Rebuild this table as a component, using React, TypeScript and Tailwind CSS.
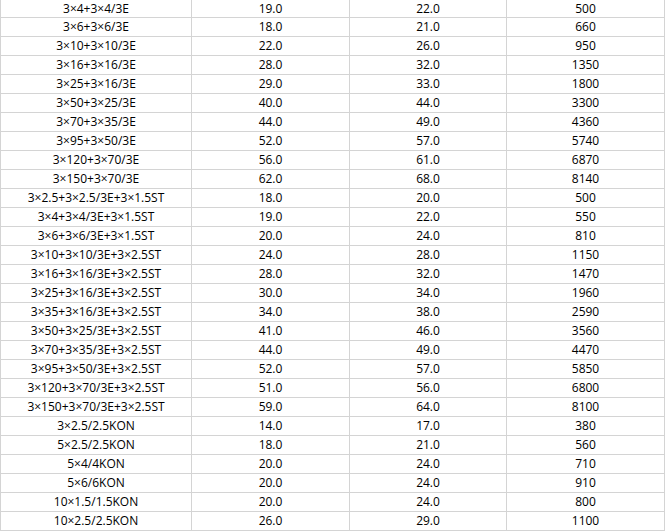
const rows: [string, string, string, string][] = [
  ['3×4+3×4/3E', '19.0', '22.0', '500'],
  ['3×6+3×6/3E', '18.0', '21.0', '660'],
  ['3×10+3×10/3E', '22.0', '26.0', '950'],
  ['3×16+3×16/3E', '28.0', '32.0', '1350'],
  ['3×25+3×16/3E', '29.0', '33.0', '1800'],
  ['3×50+3×25/3E', '40.0', '44.0', '3300'],
  ['3×70+3×35/3E', '44.0', '49.0', '4360'],
  ['3×95+3×50/3E', '52.0', '57.0', '5740'],
  ['3×120+3×70/3E', '56.0', '61.0', '6870'],
  ['3×150+3×70/3E', '62.0', '68.0', '8140'],
  ['3×2.5+3×2.5/3E+3×1.5ST', '18.0', '20.0', '500'],
  ['3×4+3×4/3E+3×1.5ST', '19.0', '22.0', '550'],
  ['3×6+3×6/3E+3×1.5ST', '20.0', '24.0', '810'],
  ['3×10+3×10/3E+3×2.5ST', '24.0', '28.0', '1150'],
  ['3×16+3×16/3E+3×2.5ST', '28.0', '32.0', '1470'],
  ['3×25+3×16/3E+3×2.5ST', '30.0', '34.0', '1960'],
  ['3×35+3×16/3E+3×2.5ST', '34.0', '38.0', '2590'],
  ['3×50+3×25/3E+3×2.5ST', '41.0', '46.0', '3560'],
  ['3×70+3×35/3E+3×2.5ST', '44.0', '49.0', '4470'],
  ['3×95+3×50/3E+3×2.5ST', '52.0', '57.0', '5850'],
  ['3×120+3×70/3E+3×2.5ST', '51.0', '56.0', '6800'],
  ['3×150+3×70/3E+3×2.5ST', '59.0', '64.0', '8100'],
  ['3×2.5/2.5KON', '14.0', '17.0', '380'],
  ['5×2.5/2.5KON', '18.0', '21.0', '560'],
  ['5×4/4KON', '20.0', '24.0', '710'],
  ['5×6/6KON', '20.0', '24.0', '910'],
  ['10×1.5/1.5KON', '20.0', '24.0', '800'],
  ['10×2.5/2.5KON', '26.0', '29.0', '1100'],
];

export default function App() {
  return (
    <div className="w-[667px] h-[531px] overflow-hidden bg-white font-['Open_Sans',sans-serif] text-[12px] text-black">
      <div className="w-[665px] border-l border-[#d4d4d4]">
        {rows.map((row, i) => (
          <div
            key={i}
            className={`grid grid-cols-[191px_158px_157px_158px] ${i === 0 ? 'h-[18px]' : 'h-[19px]'}`}
          >
            {row.map((cell, j) => (
              <div
                key={j}
                className="flex items-center justify-center border-r border-b border-[#d4d4d4] leading-none"
              >
                {cell}
              </div>
            ))}
          </div>
        ))}
      </div>
    </div>
  );
}
